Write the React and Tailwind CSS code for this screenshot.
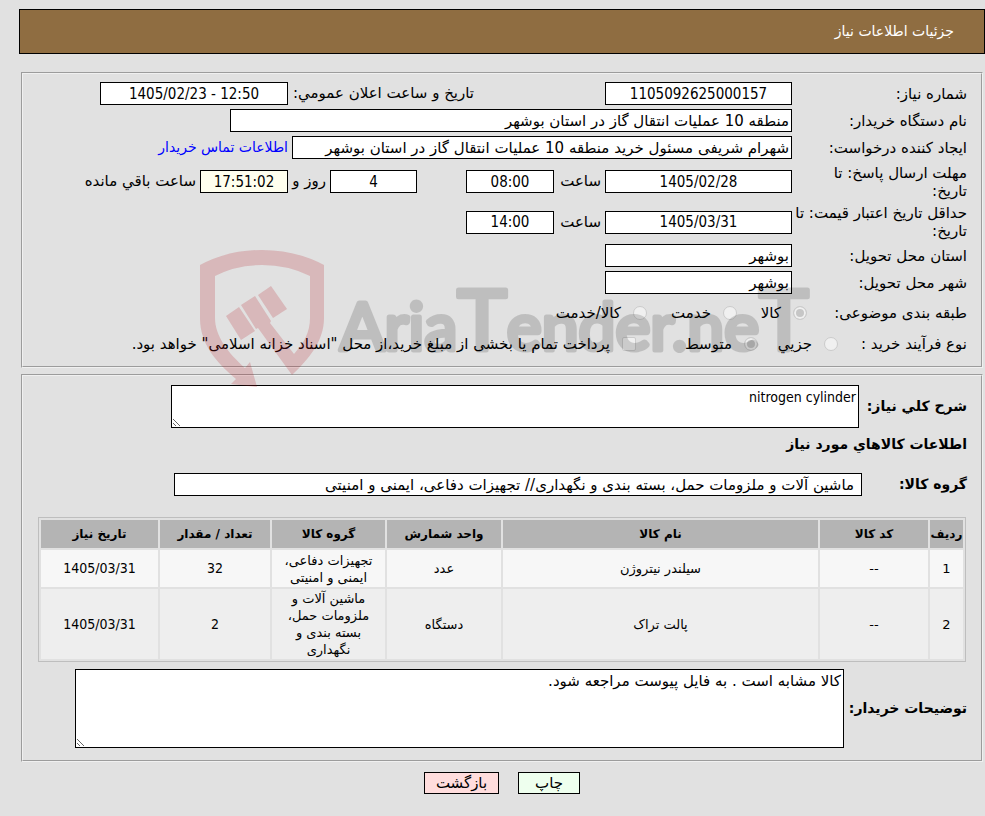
import { useId } from 'react';
import clsx from 'clsx';

const items = [
  { id: 1, code: '--', name: 'سیلندر نیتروژن', unit: 'عدد', group: 'تجهیزات دفاعی، ایمنی و امنیتی', qty: 32, date: '1405/03/31' },
  { id: 2, code: '--', name: 'پالت تراک', unit: 'دستگاه', group: 'ماشین آلات و ملزومات حمل، بسته بندی و نگهداری', qty: 2, date: '1405/03/31' },
];

const condensed = "font-['DejaVu_Sans_Condensed','DejaVu_Sans',sans-serif]";
const numeric = clsx(condensed, 'text-[15px] text-center');

function Panel({ children, className }) {
  return (
    <fieldset className={clsx('mr-[2px] ml-[21px] border-2 border-[#f0f0f0] [border-style:groove]', className)}>
      {children}
    </fieldset>
  );
}

function Field({ className, label, ...rest }) {
  return (
    <input
      type="text"
      readOnly
      aria-label={label}
      className={clsx('h-[23px] min-w-0 border border-black px-[2px] outline-none', className)}
      {...rest}
    />
  );
}

function Row({ label, htmlFor, className, children }) {
  return (
    <div className={clsx('flex items-center', className)}>
      <label htmlFor={htmlFor} className="w-[175px] shrink-0 leading-[18px]">{label}</label>
      <div className="flex min-w-0 flex-1 items-center gap-1">{children}</div>
    </div>
  );
}

function Choice({ type = 'radio', name, label, checked = false, className }) {
  const id = useId();
  return (
    <span className={clsx('flex items-center gap-3', className)}>
      <input
        id={id}
        type={type}
        name={name}
        defaultChecked={checked}
        disabled
        className={clsx(
          'size-[14px] shrink-0 appearance-none border border-[#cbcbcb]',
          type === 'radio' ? 'rounded-full' : 'rounded-xs',
          checked ? 'bg-[#c6c6c6] shadow-[inset_0_0_0_2px_#f0f0f0]' : 'bg-[#f0f0f0]'
        )}
      />
      <label htmlFor={id}>{label}</label>
    </span>
  );
}

function Watermark() {
  return (
    <svg viewBox="0 0 640 150" className="pointer-events-none absolute top-[240px] left-[190px] w-[640px]" aria-hidden="true">
      <g fill="#b4141e" fillOpacity="0.2">
        {/* shield, open at the bottom where the gavel handle and the arrow leave it */}
        <path d="M10 25 Q38 10 72 10 Q106 10 134 25 V78 C134 101 119 119 102 135 L68 88 L66 89 L51 65 L65 56 L81 81 L80 83 L104 114 C114 103 120 92 120 78 V36 Q98 25 72 25 Q46 25 25 36 V78 C25 96 38 113 55 128 L60 122 L67 147 L41 144 L46 139 C26 122 10 104 10 78 Z" />
        <path d="M36 76 L49 67 L65 91 L51 100 Z" />
        <path d="M68 55 L81 46 L97 69 L83 78 Z" />
      </g>
      <text
        x="150"
        y="110"
        direction="ltr"
        fontFamily="Lato, sans-serif"
        fontSize="66"
        fill="#000"
        stroke="#000"
        strokeWidth="5"
        strokeLinejoin="round"
        opacity="0.15"
      >
        Aria<tspan fontSize="84">T</tspan>ender.ne<tspan fontSize="84">T</tspan>
      </text>
    </svg>
  );
}

export default function App() {
  return (
    <div dir="rtl" className="relative min-h-screen bg-[#e1e1e1] pt-[9px] pb-5 font-['DejaVu_Sans',sans-serif] text-[15px] text-black">
      <header className="ml-[19px] flex h-[45px] items-center border border-black bg-[#8f6d41] pr-[30px] text-white">
        <h1 className="text-[14px]">جزئیات اطلاعات نیاز</h1>
      </header>

      <Panel className="mt-[18px] px-[14px] pt-[6px] pb-2">
        <Row label="شماره نیاز:" htmlFor="need-no" className="h-[27px]">
          <Field id="need-no" defaultValue="1105092625000157" className={clsx('w-[187px] bg-white', numeric)} />
          <label htmlFor="announce" className="mr-[127px] w-[182px] whitespace-nowrap">تاریخ و ساعت اعلان عمومي:</label>
          <Field id="announce" dir="ltr" defaultValue="1405/02/23 - 12:50" className={clsx('w-[188px] bg-white', numeric)} />
        </Row>
        <Row label="نام دستگاه خریدار:" htmlFor="buyer" className="h-[27px]">
          <Field id="buyer" defaultValue="منطقه 10 عملیات انتقال گاز در استان بوشهر" className="w-[562px] bg-white" />
        </Row>
        <Row label="ایجاد کننده درخواست:" htmlFor="creator" className="h-[27px]">
          <Field id="creator" defaultValue="شهرام شریفی مسئول خرید منطقه 10 عملیات انتقال گاز در استان بوشهر" className="w-[500px] bg-white" />
          <a href="#contact" className="text-[14px] whitespace-nowrap text-[#0000ff]">اطلاعات تماس خریدار</a>
        </Row>
        <Row label={<>مهلت ارسال پاسخ: تا<br />تاریخ:</>} htmlFor="deadline" className="h-[41px]">
          <Field id="deadline" defaultValue="1405/02/28" className={clsx('w-[187px] bg-white', numeric)} />
          <label htmlFor="deadline-time" className="w-[43px]">ساعت</label>
          <Field id="deadline-time" defaultValue="08:00" className={clsx('w-[88px] bg-white', numeric)} />
          <Field label="روز" defaultValue="4" className={clsx('mr-[45px] w-[87px] bg-white', numeric)} />
          <span className="w-[34px] whitespace-nowrap">روز و</span>
          <Field id="left" defaultValue="17:51:02" className={clsx('w-[88px] bg-[#ffffee]', numeric)} />
          <label htmlFor="left" className="whitespace-nowrap">ساعت باقي مانده</label>
        </Row>
        <Row label={<>حداقل تاریخ اعتبار قیمت: تا<br />تاریخ:</>} htmlFor="valid" className="h-[40px]">
          <Field id="valid" defaultValue="1405/03/31" className={clsx('w-[187px] bg-white', numeric)} />
          <label htmlFor="valid-time" className="w-[43px]">ساعت</label>
          <Field id="valid-time" defaultValue="14:00" className={clsx('w-[88px] bg-white', numeric)} />
        </Row>
        <Row label="استان محل تحویل:" htmlFor="province" className="h-[27px]">
          <Field id="province" defaultValue="بوشهر" className="w-[187px] bg-white" />
        </Row>
        <Row label="شهر محل تحویل:" htmlFor="city" className="h-[27px]">
          <Field id="city" defaultValue="بوشهر" className="w-[187px] bg-white" />
        </Row>
        <div className="flex h-[34px] items-center">
          <span className="w-[160px] shrink-0">طبقه بندی موضوعی:</span>
          <Choice name="kind" label="کالا" checked className="w-[70px]" />
          <Choice name="kind" label="خدمت" className="w-[90px]" />
          <Choice name="kind" label="کالا/خدمت" />
        </div>
        <div className="flex h-[28px] items-center whitespace-nowrap">
          <span className="w-[129px] shrink-0">نوع فرآیند خرید :</span>
          <Choice name="process" label="جزیي" className="w-[80px]" />
          <Choice name="process" label="متوسط" checked className="w-[122px]" />
          <Choice type="checkbox" name="treasury" label={'پرداخت تمام یا بخشی از مبلغ خرید،از محل "اسناد خزانه اسلامی" خواهد بود.'} />
        </div>
      </Panel>

      <Panel className="mt-[6px] px-[14px] pt-[9px] pb-3">
        <div className="flex items-center gap-1">
          <label htmlFor="summary" className="w-[104px] shrink-0 text-[14px] font-bold whitespace-nowrap">شرح كلي نیاز:</label>
          <textarea id="summary" readOnly defaultValue="nitrogen cylinder" className={clsx('block h-[43px] w-[688px] border border-black bg-white px-[2px] text-[14px] leading-[22px] outline-none', condensed)} />
        </div>
        <h2 className="mt-1 text-[14px] leading-6 font-bold">اطلاعات كالاهاي مورد نیاز</h2>
        <div className="mt-[17px] flex items-center">
          <label htmlFor="group" className="w-[105px] shrink-0 text-[14px] font-bold">گروه کالا:</label>
          <Field id="group" defaultValue="ماشین آلات و ملزومات حمل، بسته بندی و نگهداری// تجهیزات دفاعی، ایمنی و امنیتی" className="w-[688px] bg-white pr-[7px]" />
        </div>

        <table className="mt-[21px] mr-px w-[calc(100%-2px)] table-fixed border-separate border-spacing-[2px] border border-[#bebebe] text-center text-[13px] leading-[17px]">
          <colgroup>
            <col className="w-[33px]" />
            <col className="w-[108px]" />
            <col />
            <col className="w-[114px]" />
            <col className="w-[113px]" />
            <col className="w-[110px]" />
            <col className="w-[117px]" />
          </colgroup>
          <thead>
            <tr className="h-[28px] bg-[#b4b4b4] text-[12px] whitespace-nowrap">
              <th>ردیف</th>
              <th>کد کالا</th>
              <th>نام کالا</th>
              <th>واحد شمارش</th>
              <th>گروه کالا</th>
              <th>تعداد / مقدار</th>
              <th>تاریخ نیاز</th>
            </tr>
          </thead>
          <tbody>
            {items.map((item) => (
              <tr key={item.id} className="h-[37px] odd:bg-[#f7f7f7] even:bg-[#eeeeee]">
                <td>{item.id}</td>
                <td>{item.code}</td>
                <td>{item.name}</td>
                <td>{item.unit}</td>
                <td className="px-2 py-[1px]">{item.group}</td>
                <td className={clsx('text-[14px]', condensed)}>{item.qty}</td>
                <td className={clsx('text-[14px]', condensed)}>{item.date}</td>
              </tr>
            ))}
          </tbody>
        </table>

        <div className="mt-[7px] flex items-center gap-1">
          <label htmlFor="notes" className="w-[119px] shrink-0 text-[14px] font-bold whitespace-nowrap">توضیحات خریدار:</label>
          <textarea id="notes" readOnly defaultValue="کالا مشابه است . به فایل پیوست مراجعه شود." className="block h-[79px] w-[769px] border border-black bg-white px-[2px] leading-[22px] outline-none" />
        </div>
      </Panel>

      <div className="mt-[10px] flex justify-center gap-[19px] pl-[19px]">
        <button type="button" className="h-[22px] w-[62px] border border-black bg-[#eeffee] leading-5">چاپ</button>
        <button type="button" className="h-[22px] w-[75px] border border-black bg-[#ffdddd] leading-5">بازگشت</button>
      </div>

      <Watermark />
    </div>
  );
}
